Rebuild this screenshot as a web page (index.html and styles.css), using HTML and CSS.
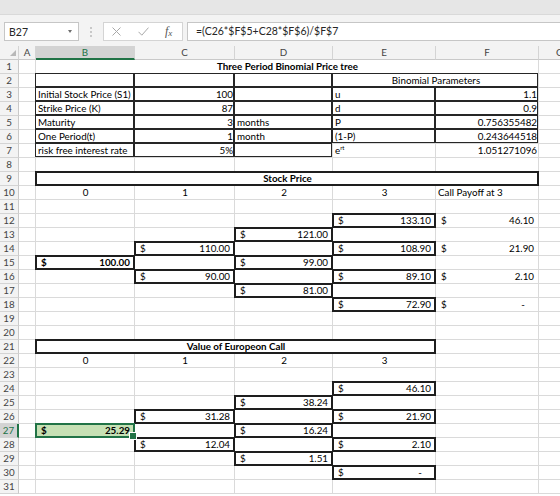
FILE: index.html
```html
<!DOCTYPE html>
<html lang="en">
<head>
  <meta charset="UTF-8">
  <meta name="viewport" content="width=device-width, initial-scale=1.0">
  <title>Three Period Binomial Price tree</title>
  <link rel="stylesheet" href="styles.css">
</head>
<body>
  <div class="top-band"></div>
  <div class="formula-bar">
    <div class="name-box"><span>B27</span><span class="caret"></span></div>
    <div class="grip"><span></span><span></span><span></span></div>
    <div class="fx-box">
      <svg class="ico-x" width="9" height="9" viewBox="0 0 9 9"><path d="M0.5 0.5L8.5 8.5M8.5 0.5L0.5 8.5" stroke="#a8a8a8" stroke-width="1" fill="none"/></svg>
      <svg class="ico-ok" width="11" height="9" viewBox="0 0 11 9"><path d="M0.5 4.8L3.8 8.2L10.5 0.6" stroke="#a8a8a8" stroke-width="1" fill="none"/></svg>
      <span class="fx">f<sub>x</sub></span>
    </div>
    <div class="formula">=(C26*$F$5+C28*$F$6)/$F$7</div>
  </div>
  <div class="sheet" id="sheet"></div>

  <script>
    const cols = ['A', 'B', 'C', 'D', 'E', 'F', 'G'];
    const T = (text, cls) => ({ text, cls });
    const M = (num, cls) => ({ money: num, cls });

    const data = {
      1: { B: { text: 'Three Period Binomial Price tree', cls: 'bold center', span: 5 } },
      2: { B: T('', 'thin'), C: T('', 'thin'), D: T('', 'thin'), E: { text: 'Binomial Parameters', cls: 'thin center', span: 2 } },
      3: { B: T('Initial Stock Price (S1)', 'thin'), C: T('100', 'thin right'), D: T('', 'thin'), E: T('u', 'thin'), F: T('1.1', 'thin right') },
      4: { B: T('Strike Price (K)', 'thin'), C: T('87', 'thin right'), D: T('', 'thin'), E: T('d', 'thin'), F: T('0.9', 'thin right') },
      5: { B: T('Maturity', 'thin'), C: T('3', 'thin right'), D: T('months', 'thin'), E: T('P', 'thin'), F: T('0.756355482', 'thin right') },
      6: { B: T('One Period(t)', 'thin'), C: T('1', 'thin right'), D: T('month', 'thin'), E: T('(1-P)', 'thin'), F: T('0.243644518', 'thin right') },
      7: { B: T('risk free interest rate', 'thin'), C: T('5%', 'thin right'), D: T('', 'thin'), E: T('e<sup>rt</sup>'), F: T('1.051271096', 'right') },
      9: { B: { text: 'Stock Price', cls: 'box bold center', span: 5 } },
      10: { B: T('0', 'center'), C: T('1', 'center'), D: T('2', 'center'), E: T('3', 'center'), F: T('Call Payoff at 3') },
      12: { E: M('133.10', 'box'), F: M('46.10') },
      13: { D: M('121.00', 'box') },
      14: { C: M('110.00', 'box'), E: M('108.90', 'box'), F: M('21.90') },
      15: { B: M('100.00', 'box bold'), D: M('99.00', 'box') },
      16: { C: M('90.00', 'box'), E: M('89.10', 'box'), F: M('2.10') },
      17: { D: M('81.00', 'box') },
      18: { E: M('72.90', 'box'), F: M('-', 'dash') },
      21: { B: { text: 'Value of Europeon Call', cls: 'box bold center', span: 4 } },
      22: { B: T('0', 'center'), C: T('1', 'center'), D: T('2', 'center'), E: T('3', 'center') },
      24: { E: M('46.10', 'box') },
      25: { D: M('38.24', 'box') },
      26: { C: M('31.28', 'box'), E: M('21.90', 'box') },
      27: { B: M('25.29', 'bold active'), D: M('16.24', 'box') },
      28: { C: M('12.04', 'box'), E: M('2.10', 'box') },
      29: { D: M('1.51', 'box') },
      30: { E: M('-', 'box dash') }
    };

    const sheet = document.getElementById('sheet');

    function add(cls, html) {
      const el = document.createElement('div');
      el.className = cls;
      el.innerHTML = html || '';
      sheet.appendChild(el);
      return el;
    }

    // column headers
    add('hd corner', '<span class="tri"></span>');
    cols.forEach(c => add('hd' + (c === 'B' ? ' sel' : ''), c));

    // rows
    for (let r = 1; r <= 31; r++) {
      add('rh' + (r === 27 ? ' sel' : ''), r);
      const row = data[r] || {};
      let skip = 0;
      cols.forEach(c => {
        if (skip) { skip--; return; }
        const cell = row[c];
        if (!cell) { add('cell'); return; }
        let el;
        if (cell.money) {
          el = add('cell money ' + (cell.cls || ''), `<span>$</span><span>${cell.money}</span>`);
        } else {
          el = add('cell ' + (cell.cls || ''), cell.text);
        }
        if (cell.span) {
          el.style.gridColumn = 'span ' + cell.span;
          skip = cell.span - 1;
        }
      });
    }
  </script>
</body>
</html>
```

FILE: styles.css
```css
* {margin: 0; padding: 0; box-sizing: border-box;}
body {
  font-family: Lato, "Liberation Sans", sans-serif;
  background: #fff;
  color: #000;
  width: 560px;
  height: 496px;
  overflow: hidden;
}
.top-band {
  height: 15px;
  background: #e6e6e6;
  border-bottom: 1px solid #d9d9d9;
}
.formula-bar {
  height: 31px;
  background: #f3f3f3;
  display: flex;
  align-items: flex-start;
  padding: 7px 0 0 4px;
}
.name-box {
  width: 75px;
  height: 19px;
  background: #fff;
  border: 1px solid #c6c6c6;
  display: flex;
  align-items: center;
  justify-content: space-between;
  padding: 0 6px 0 4px;
  font-size: 10.5px;
  color: #262626;
}
.caret {
  border-left: 2px solid transparent;
  border-right: 2px solid transparent;
  border-top: 3px solid #6e6e6e;
}
.grip {
  width: 24px;
  height: 19px;
  display: flex;
  flex-direction: column;
  align-items: center;
  justify-content: center;
  gap: 2px;
}
.grip span {
  width: 2px;
  height: 2px;
  background: #c8c8c8;
}
.fx-box {
  width: 80px;
  height: 19px;
  background: #fff;
  border: 1px solid #d4d4d4;
  display: flex;
  align-items: center;
  padding-left: 8px;
}
.ico-ok {
  margin-left: 17px;
}
.fx {
  margin-left: 16px;
  font-family: "Liberation Serif", serif;
  font-style: italic;
  font-size: 12px;
  line-height: 12px;
  color: #555;
}
.fx sub {
  font-size: 9px;
  vertical-align: -1px;
}
.formula {
  flex: 1;
  height: 19px;
  margin-left: 4px;
  background: #fff;
  border: 1px solid #c6c6c6;
  border-right: none;
  padding-left: 8px;
  font-size: 10.5px;
  line-height: 17px;
  color: #262626;
}
.sheet {
  display: grid;
  grid-template-columns: 19px 17px 99px 100px 98px 103px 103px 42px;
  grid-auto-rows: 14px;
  width: 560px;
  overflow: hidden;
  font-size: 9.8px;
}
.hd {
  background: #f3f3f3;
  color: #444;
  text-align: center;
  line-height: 13px;
  border-right: 1px solid #d4d4d4;
  border-bottom: 1px solid #c9c9c9;
}
.hd.sel {
  background: #d3d3d3;
  color: #217346;
  border-bottom: 2px solid #217346;
}
.corner {
  display: flex;
  justify-content: flex-end;
  align-items: flex-end;
  padding: 0 2px 3px 0;
}
.tri {
  border-left: 6px solid transparent;
  border-bottom: 6px solid #b8b8b8;
}
.rh {
  background: #f3f3f3;
  color: #444;
  text-align: center;
  line-height: 13px;
  border-right: 1px solid #c9c9c9;
  border-bottom: 1px solid #d4d4d4;
}
.rh.sel {
  background: #d3d3d3;
  color: #217346;
  border-right: 2px solid #217346;
}
.cell {
  border-right: 1px solid #dadada;
  border-bottom: 1px solid #dadada;
  line-height: 12px;
  padding: 0 1px 0 2px;
  white-space: nowrap;
}
.cell sup {
  font-size: 6px;
  line-height: 0;
  vertical-align: 4px;
}
.right {text-align: right;}
.center {text-align: center;}
.bold {font-weight: 700;}
.money {
  display: flex;
  justify-content: space-between;
  padding: 0 4px 0 5px;
}
.dash span:last-child {
  padding-right: 9px;
}
.thin, .box, .active {
  position: relative;
}
.thin::after {
  content: '';
  position: absolute;
  top: -1px;
  left: -1px;
  right: 0;
  bottom: 0;
  border: 1px solid #262626;
}
.box::after {
  content: '';
  position: absolute;
  inset: -1px;
  border: 2px solid #1e1e1e;
}
.active {
  background: #c6e0b4;
  z-index: 1;
}
.active::after {
  content: '';
  position: absolute;
  inset: -1px;
  border: 2px solid #217346;
}
.active::before {
  content: '';
  position: absolute;
  right: -3px;
  bottom: -3px;
  width: 6px;
  height: 6px;
  background: #217346;
  border: 1px solid #fff;
  z-index: 2;
}
```
